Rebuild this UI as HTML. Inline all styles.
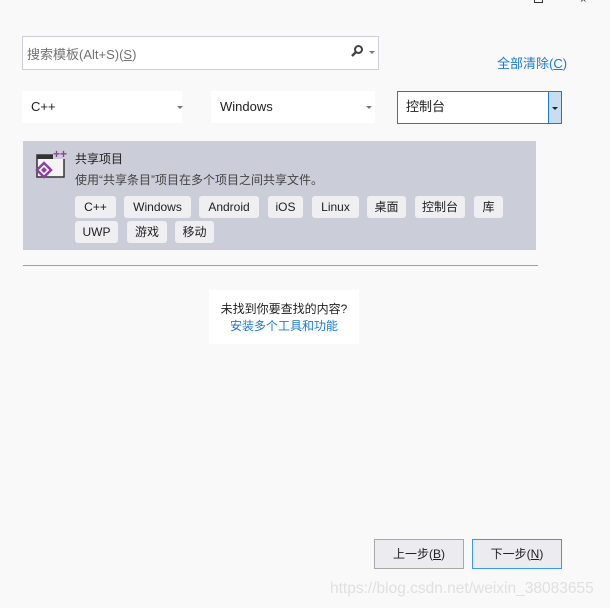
<!DOCTYPE html>
<html><head><meta charset="utf-8"><style>
*{margin:0;padding:0;box-sizing:border-box}
body{width:610px;height:608px;background:#f9f9f9;position:relative;overflow:hidden;font-family:"Liberation Sans","Noto Sans CJK SC",sans-serif;font-size:12px;color:#1e1e1e}
.a{position:absolute}
.dd{position:absolute;background:#fff;height:32px;top:91px;line-height:32px;padding-left:9px;font-size:13px}
.arr{position:absolute;width:0;height:0;border-left:3px solid transparent;border-right:3px solid transparent;border-top:3px solid #777}
.tag{position:absolute;height:22px;line-height:22px;background:#efeff2;border-radius:3px;text-align:center;font-size:12px}
.btn{position:absolute;top:539px;width:90px;height:30px;background:#ececf0;text-align:center;line-height:28px;font-size:12px}
</style></head><body>
<div class="a" style="left:534px;top:-4px;width:9px;height:7px;border:1px solid #333"></div>
<div class="a" style="left:580px;top:-6px;font-size:11px;color:#333">×</div>

<div class="a" style="left:22px;top:36px;width:357px;height:34px;background:#fff;border:1px solid #ccced9"></div>
<div class="a" style="left:27px;top:44px;font-size:13px;color:#717171">搜索模板(Alt+S)(<u>S</u>)</div>
<svg class="a" style="left:350px;top:44px" width="14" height="14" viewBox="0 0 14 14"><circle cx="8.5" cy="5.5" r="3.5" fill="none" stroke="#444" stroke-width="2"/><path d="M6 8 L2 12" stroke="#444" stroke-width="2.4"/></svg>
<div class="arr" style="left:369px;top:51px"></div>
<div class="a" style="left:497px;top:53px;color:#1a7ad4;font-size:13px">全部清除(<u>C</u>)</div>

<div class="dd" style="left:22px;width:160px">C++</div><div class="arr" style="left:177px;top:106px"></div>
<div class="dd" style="left:211px;width:164px">Windows</div><div class="arr" style="left:366px;top:106px"></div>
<div class="a" style="left:397px;top:91px;width:165px;height:33px;background:#fff;border:1px solid #1a7ad4;line-height:30px;padding-left:8px;font-size:13px">控制台</div>
<div class="a" style="left:548px;top:92px;width:13px;height:31px;background:#c8dcf2;border-left:1px solid #1a7ad4"></div>
<div class="arr" style="left:552px;top:107px;border-top-color:#222"></div>

<div class="a" style="left:23px;top:141px;width:513px;height:109px;background:#cbcdd9"></div>
<svg class="a" style="left:35px;top:149px" width="32" height="32" viewBox="0 0 32 32">
<rect x="2" y="6" width="27" height="22" fill="#f4f4f4" stroke="#333" stroke-width="1.5"/><rect x="2" y="6" width="27" height="4" fill="#333"/>
<rect x="18" y="0" width="14" height="10" fill="#cbcdd9"/><text x="18" y="9" font-size="12" font-weight="bold" fill="#8e3f9e" font-family="Liberation Sans">++</text>
<path d="M9 14 L16 21 L9 28 L2 21 Z" fill="#fff" stroke="#8e3f9e" stroke-width="2.5"/><path d="M9 18 L12 21 L9 24 L6 21Z" fill="#8e3f9e"/></svg>
<div class="a" style="left:75px;top:150px;font-size:12px">共享项目</div>
<div class="a" style="left:75px;top:171px;font-size:12px;color:#444">使用“共享条目”项目在多个项目之间共享文件。</div>
<div class="tag" style="left:75px;top:196px;width:41px">C++</div>
<div class="tag" style="left:124px;top:196px;width:67px">Windows</div>
<div class="tag" style="left:199px;top:196px;width:60px">Android</div>
<div class="tag" style="left:268px;top:196px;width:35px">iOS</div>
<div class="tag" style="left:312px;top:196px;width:47px">Linux</div>
<div class="tag" style="left:367px;top:196px;width:39px">桌面</div>
<div class="tag" style="left:415px;top:196px;width:50px">控制台</div>
<div class="tag" style="left:474px;top:196px;width:29px">库</div>
<div class="tag" style="left:75px;top:221px;width:43px">UWP</div>
<div class="tag" style="left:127px;top:221px;width:40px">游戏</div>
<div class="tag" style="left:175px;top:221px;width:39px">移动</div>

<div class="a" style="left:23px;top:265px;width:515px;height:1px;background:#a0a0a0"></div>

<div class="a" style="left:209px;top:290px;width:150px;height:54px;background:#fff;text-align:center;padding-top:11px;line-height:17px">未找到你要查找的内容?<br><span style="color:#1a7ad4">安装多个工具和功能</span></div>

<div class="btn" style="left:374px;border:1px solid #a8a8a8">上一步(<u>B</u>)</div>
<div class="btn" style="left:472px;border:1px solid #3c96f0">下一步(<u>N</u>)</div>
<div class="a" style="left:330px;top:580px;font-size:15.5px;color:#e0e0e0;white-space:nowrap">https://blog.csdn.net/weixin_38083655</div>
</body></html>
